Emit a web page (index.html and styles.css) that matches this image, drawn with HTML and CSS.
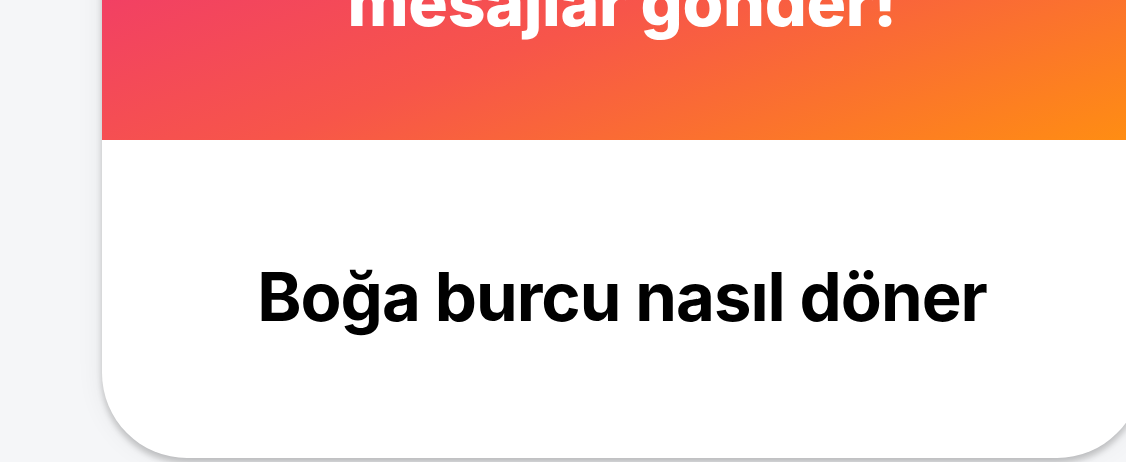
FILE: index.html
```html
<!DOCTYPE html>
<html lang="tr">
<head>
<meta charset="utf-8">
<title>Boğa burcu nasıl döner</title>
<link rel="stylesheet" href="styles.css">
</head>
<body>
<main class="page">
  <article class="card">
    <header class="card-hero">
      <h2 class="hero-title">mesajlar gönder!</h2>
    </header>
    <section class="card-body">
      <h1 class="card-title">Boğa burcu nasıl döner</h1>
    </section>
  </article>
</main>
</body>
</html>
```

FILE: styles.css
```css
html, body {
  margin: 0;
  padding: 0;
}
body {
  background: #f5f6f8;
  font-family: "Inter", "Liberation Sans", sans-serif;
  overflow: hidden;
  height: 462px;
}
.page {
  padding-left: 102px;
}
.card {
  width: 1040px;
  margin-top: -60px;
  background: #ffffff;
  border-radius: 0 0 85px 85px;
  box-shadow: 0 0 28px rgba(0, 0, 0, 0.07), 0 5px 6px rgba(0, 0, 0, 0.2);
  overflow: hidden;
}
.card-hero {
  height: 200px;
  box-sizing: border-box;
  display: flex;
  flex-direction: column;
  justify-content: flex-end;
  align-items: center;
  padding-bottom: 105px;
  background: linear-gradient(160deg, #f03a6b 0%, #f7554a 45%, #ff8e12 100%);
}
.hero-title {
  margin: 0;
  color: #ffffff;
  font-size: 66px;
  line-height: 1;
  font-weight: 800;
  letter-spacing: -0.3px;
}
.card-body {
  height: 318px;
  box-sizing: border-box;
  padding-bottom: 4px;
  display: flex;
  align-items: center;
  justify-content: center;
}
.card-title {
  margin: 0;
  color: #000000;
  font-size: 67px;
  line-height: 1.2;
  font-weight: 700;
  letter-spacing: -1px;
}
```
